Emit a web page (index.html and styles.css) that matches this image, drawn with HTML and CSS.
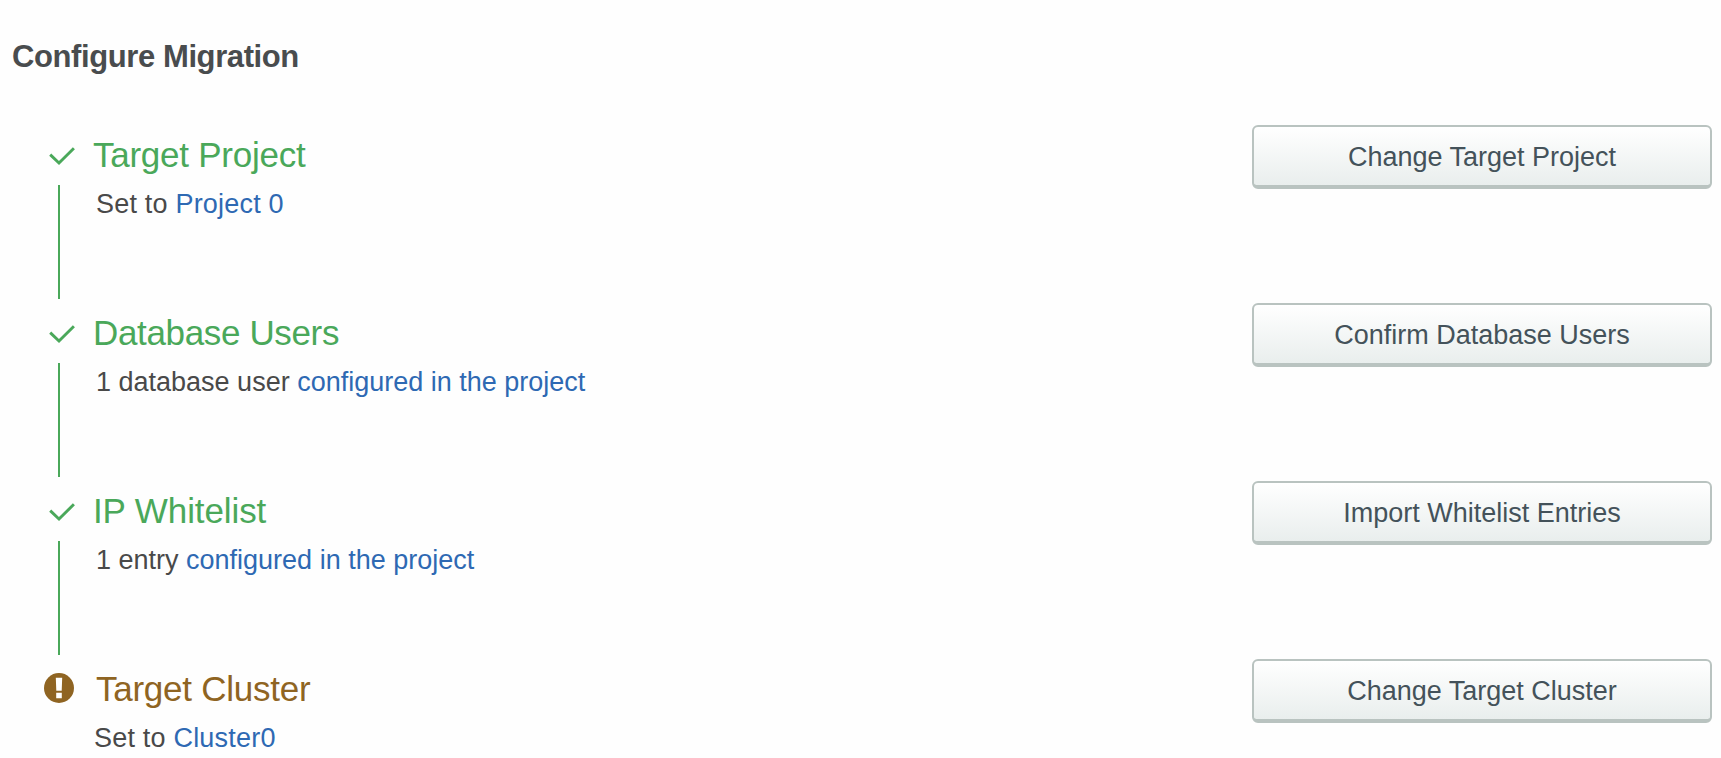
FILE: index.html
```html
<!DOCTYPE html>
<html lang="en">
<head>
<meta charset="UTF-8" />
<meta name="viewport" content="width=device-width, initial-scale=1.0">
<title>Configure Migration</title>
<link rel="stylesheet" href="styles.css">
</head>
<body>
<main class="migration">
  <h1>Configure Migration</h1>

  <section class="step done project">
    <div class="marker">
      <svg class="icon" viewBox="0 0 30 30"><path d="M6.2 15.6 L15 24 L29.9 9.3"/></svg>
      <div class="line"></div>
    </div>
    <div class="info">
      <h2>Target Project</h2>
      <p>Set to <a href="#">Project 0</a></p>
    </div>
    <button>Change Target Project</button>
  </section>

  <section class="step done users">
    <div class="marker">
      <svg class="icon" viewBox="0 0 30 30"><path d="M6.2 15.6 L15 24 L29.9 9.3"/></svg>
      <div class="line"></div>
    </div>
    <div class="info">
      <h2>Database Users</h2>
      <p>1 database user <a href="#">configured in the project</a></p>
    </div>
    <button>Confirm Database Users</button>
  </section>

  <section class="step done whitelist">
    <div class="marker">
      <svg class="icon" viewBox="0 0 30 30"><path d="M6.2 15.6 L15 24 L29.9 9.3"/></svg>
      <div class="line"></div>
    </div>
    <div class="info">
      <h2>IP Whitelist</h2>
      <p>1 entry <a href="#">configured in the project</a></p>
    </div>
    <button>Import Whitelist Entries</button>
  </section>

  <section class="step warning">
    <div class="marker">
      <svg class="icon" viewBox="0 0 30 30"><circle cx="15" cy="15" r="15"/><path d="M11.8 4.8h6.4l-.5 13h-5.4zM12.2 19.8h5.6v5.4h-5.6z"/></svg>
    </div>
    <div class="info">
      <h2>Target Cluster</h2>
      <p>Set to <a href="#">Cluster0</a></p>
    </div>
    <button>Change Target Cluster</button>
  </section>
</main>
</body>
</html>
```

FILE: styles.css
```css
body { margin:0; background:#fefefe; color:#494949; font-family:"Liberation Sans",Arial,sans-serif; overflow:hidden; }
.migration{ height:758px; overflow:hidden; }
h1{ margin:0; padding:39px 0 50px 12px; font-size:31px; line-height:36px; font-weight:bold; letter-spacing:-0.4px; color:#494c4e; }
.step{ display:flex; align-items:flex-start; height:178px; padding:0 9px 0 44px; }
.marker{ width:30px; padding-top:14px; display:flex; flex-direction:column; align-items:center; }
.icon{ display:block; width:30px; height:30px; overflow:visible; }
.line{ width:2px; height:114px; margin-top:16px; background:#4aa85a; }
.info{ flex:1; padding-left:19px; }
h2{ margin:10px 0 13px; font-size:35px; line-height:40px; font-weight:normal; letter-spacing:-0.25px; }
p{ margin:0 0 0 2px; font-size:27px; line-height:32px; letter-spacing:0.2px; }
a{ color:#2e69b3; text-decoration:none; }

.done h2{ color:#4aa85a; }
.done .icon path{ fill:none; stroke:#4aa85a; stroke-width:2.9; }
.project p{ margin-left:3px; }
.users h2{ letter-spacing:-0.35px; }
.users p{ margin-left:3px; letter-spacing:0; }
.whitelist h2{ letter-spacing:-0.1px; }
.whitelist p{ margin-left:3px; letter-spacing:0; }

.warning h2{ color:#8f6422; padding-left:3px; }
.warning p{ margin-left:1px; }
.warning circle{ fill:#8f6422; }
.warning .icon path{ fill:#fff; }

button{ box-sizing:border-box; width:460px; height:64px; padding:2px 0 0; border:2px solid #b9c3c0; border-bottom-width:4px; border-radius:6px; background:linear-gradient(#fff,#e9eeed); color:#44525a; font-family:inherit; font-size:27px; cursor:pointer; }
button:hover{ background:linear-gradient(#fff,#dfe6e4); }
```
